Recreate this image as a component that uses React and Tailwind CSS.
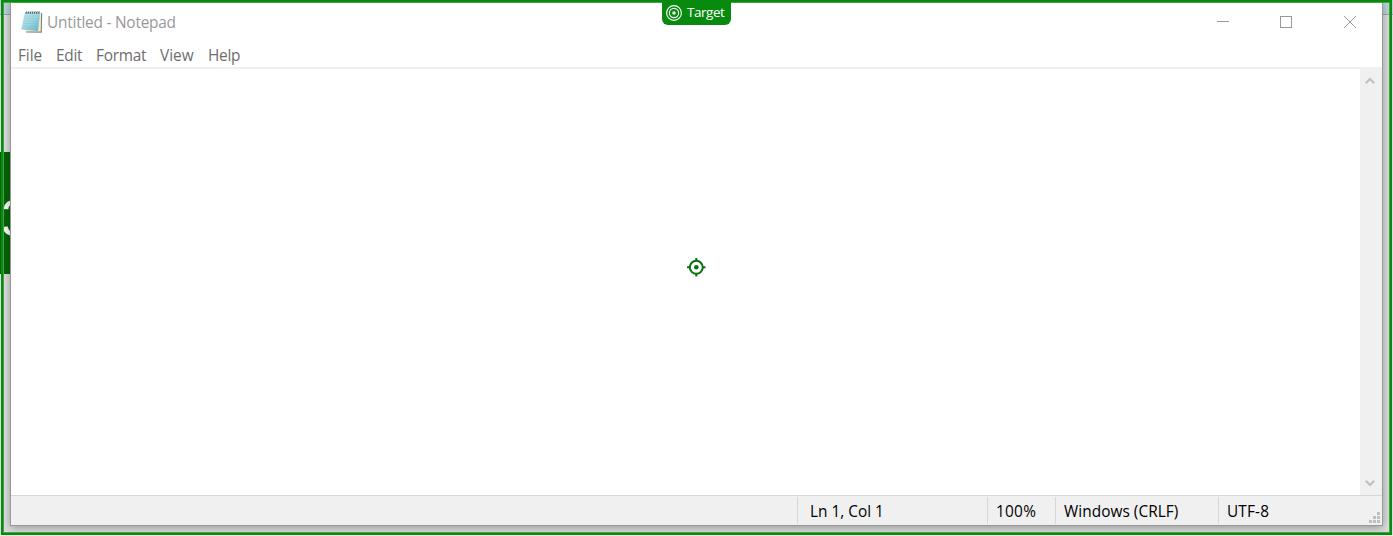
const MENU = [
  ['File', 'w-[38px]', 'tracking-[-0.1px]'],
  ['Edit', 'w-[40px]', 'tracking-[-0.25px]'],
  ['Format', 'w-[64px]', 'tracking-[-0.25px]'],
  ['View', 'w-[48px]', 'tracking-[0px]'],
  ['Help', 'w-[48px]', 'tracking-[-0.3px]'],
];

function NotepadIcon() {
  return (
    <svg width="22" height="24" viewBox="0 0 22 24" className="block shrink-0">
      <defs>
        <linearGradient id="page" x1="0" y1="0" x2="1" y2="1">
          <stop offset="0" stopColor="#c3e9ef" />
          <stop offset="0.5" stopColor="#a0d8e3" />
          <stop offset="1" stopColor="#5fb1c4" />
        </linearGradient>
      </defs>
      <path d="M5 3.5L21.2 3L20.8 22.8L5.2 22.4Z" fill="#8b8068" />
      <path d="M5 3L20.1 2.8L19.7 21.6L4 21.4Z" fill="#f2ead2" />
      <path d="M3.8 2.4L19.2 2.4L17 21L0.2 19.6Z" fill="url(#page)" />
      <path d="M3.6 6h15M3.2 8.5h15.2M2.8 11h15.3M2.3 13.5h15.5M1.8 16h15.6M1.2 18.3h16" stroke="#76bdcc" strokeWidth="0.6" opacity="0.6" />
      <path d="M4.5 2.9H19" stroke="#53666c" strokeWidth="1.6" strokeDasharray="1.3 0.8" />
      <path d="M5 1.5H19" stroke="#a5adb0" strokeWidth="1" strokeDasharray="1.3 0.8" />
    </svg>
  );
}

function TargetBadge() {
  return (
    <div className="absolute left-[662px] top-0 flex h-[25px] w-[69px] items-center rounded-b-[6px] bg-[#088a0e] pl-[4px] text-[13.5px] text-white">
      <svg width="16" height="16" viewBox="0 0 16 16" fill="none" stroke="white" className="mr-[5px] shrink-0">
        <circle cx="8" cy="8" r="7.4" strokeWidth="1.1" />
        <circle cx="8" cy="8" r="4.6" strokeWidth="1.1" />
        <circle cx="8" cy="8" r="1.7" fill="white" stroke="none" />
      </svg>
      <span className="relative -top-px leading-[24px] tracking-[-0.45px]">Target</span>
    </div>
  );
}

function Crosshair() {
  return (
    <svg width="19" height="19" viewBox="0 0 19 19" fill="none" stroke="#087010" strokeWidth="2">
      <circle cx="9.3" cy="9.3" r="6.5" />
      <path d="M9.3 0v3M9.3 15.5v3M0 9.3h3M15.5 9.3h3" />
      <circle cx="9.3" cy="9.3" r="2.3" fill="#087010" stroke="none" />
    </svg>
  );
}

export default function App() {
  return (
    <div className="relative h-[536px] w-[1393px] overflow-hidden bg-[#dedede] pl-[10px] font-['Open_Sans','Noto_Sans',sans-serif]">
      <div className="absolute left-0 top-0 h-[15px] w-full border-b border-[#8faab0] bg-[#bed3d9]" />
      <div className="absolute left-0 top-[152px] h-[122px] w-[40px] bg-[#066406]">
        <span className="absolute left-[1px] top-[36px] font-['Liberation_Sans',sans-serif] text-[52px] leading-[60px] text-white">3</span>
      </div>

      <div className="relative flex h-[526px] w-[1373px] flex-col border border-t-0 border-[#989898] bg-white shadow-[0_2px_9px_rgba(0,0,0,0.33)]">
        <header className="flex h-[44px] shrink-0 items-center pl-[10px]">
          <NotepadIcon />
          <span className="ml-[4px] grow pt-[1px] text-[15.4px] leading-[21px] tracking-[-0.22px] text-[#999999]">Untitled - Notepad</span>
          <svg width="146" height="16" viewBox="0 0 146 16" fill="none" stroke="#999999" className="mr-[19px]" shapeRendering="crispEdges">
            <path d="M0 7.5H12" />
            <rect x="63.5" y="2.5" width="11" height="11" />
            <path d="M127 2l12 12m0-12l-12 12" shapeRendering="auto" />
          </svg>
        </header>
        <nav className="flex h-[25px] shrink-0 items-start border-b-2 border-[#f0f0f0] pl-[7px] text-[15.4px] leading-[23px] text-[#6d6d6d]">
          {MENU.map(([label, width, tracking]) => (
            <span key={label} className={`${width} ${tracking}`}>{label}</span>
          ))}
        </nav>
        <div className="flex min-h-0 flex-1">
          <main className="flex-1" />
          <div className="flex w-[22px] flex-col items-center justify-between bg-[#f0f0f0] py-[8px] pr-[2px]">
            <svg width="10" height="8" viewBox="0 0 10 8" fill="none" stroke="#bfbfbf" strokeWidth="2"><path d="M0.8 6.2L5 2L9.2 6.2" /></svg>
            <svg width="10" height="8" viewBox="0 0 10 8" fill="none" stroke="#bfbfbf" strokeWidth="2"><path d="M0.8 1.8L5 6L9.2 1.8" /></svg>
          </div>
        </div>
        <footer className="flex h-[30px] shrink-0 border-t border-[#d7d7d7] bg-[#f0f0f0] pt-[1px] text-[15.4px] leading-[29px] text-black">
          <span className="w-[786px]" />
          <span className="h-[27px] w-[190px] border-l border-[#d7d7d7] pl-[12px]">Ln 1, Col 1</span>
          <span className="h-[27px] w-[68px] border-l border-[#d7d7d7] pl-[8px] tracking-[0.25px]">100%</span>
          <span className="h-[27px] w-[163px] border-l border-[#d7d7d7] pl-[8px] tracking-[0.05px]">Windows (CRLF)</span>
          <span className="h-[27px] flex-1 border-l border-[#d7d7d7] pl-[8px] tracking-[0.15px]">UTF-8</span>
          <svg width="11" height="11" viewBox="0 0 11 11" fill="#bfbfbf" className="mb-[2px] mr-[2px] self-end">
            <path d="M8 0h3v3h-3zM4 4h3v3h-3zM8 4h3v3h-3zM0 8h3v3h-3zM4 8h3v3h-3zM8 8h3v3h-3z" />
          </svg>
        </footer>
      </div>

      <div className="absolute left-[687px] top-[258px]"><Crosshair /></div>
      <div className="pointer-events-none absolute bottom-px left-px right-px top-0 border-[3px] border-[#088a0e]" />
      <div className="pointer-events-none absolute bottom-[3px] left-[3px] right-[3px] top-[2px] border border-[#3fa544]" />
      <div className="absolute bottom-0 left-0 h-px w-full bg-[#e8f1e8]" />
      <TargetBadge />
    </div>
  );
}
